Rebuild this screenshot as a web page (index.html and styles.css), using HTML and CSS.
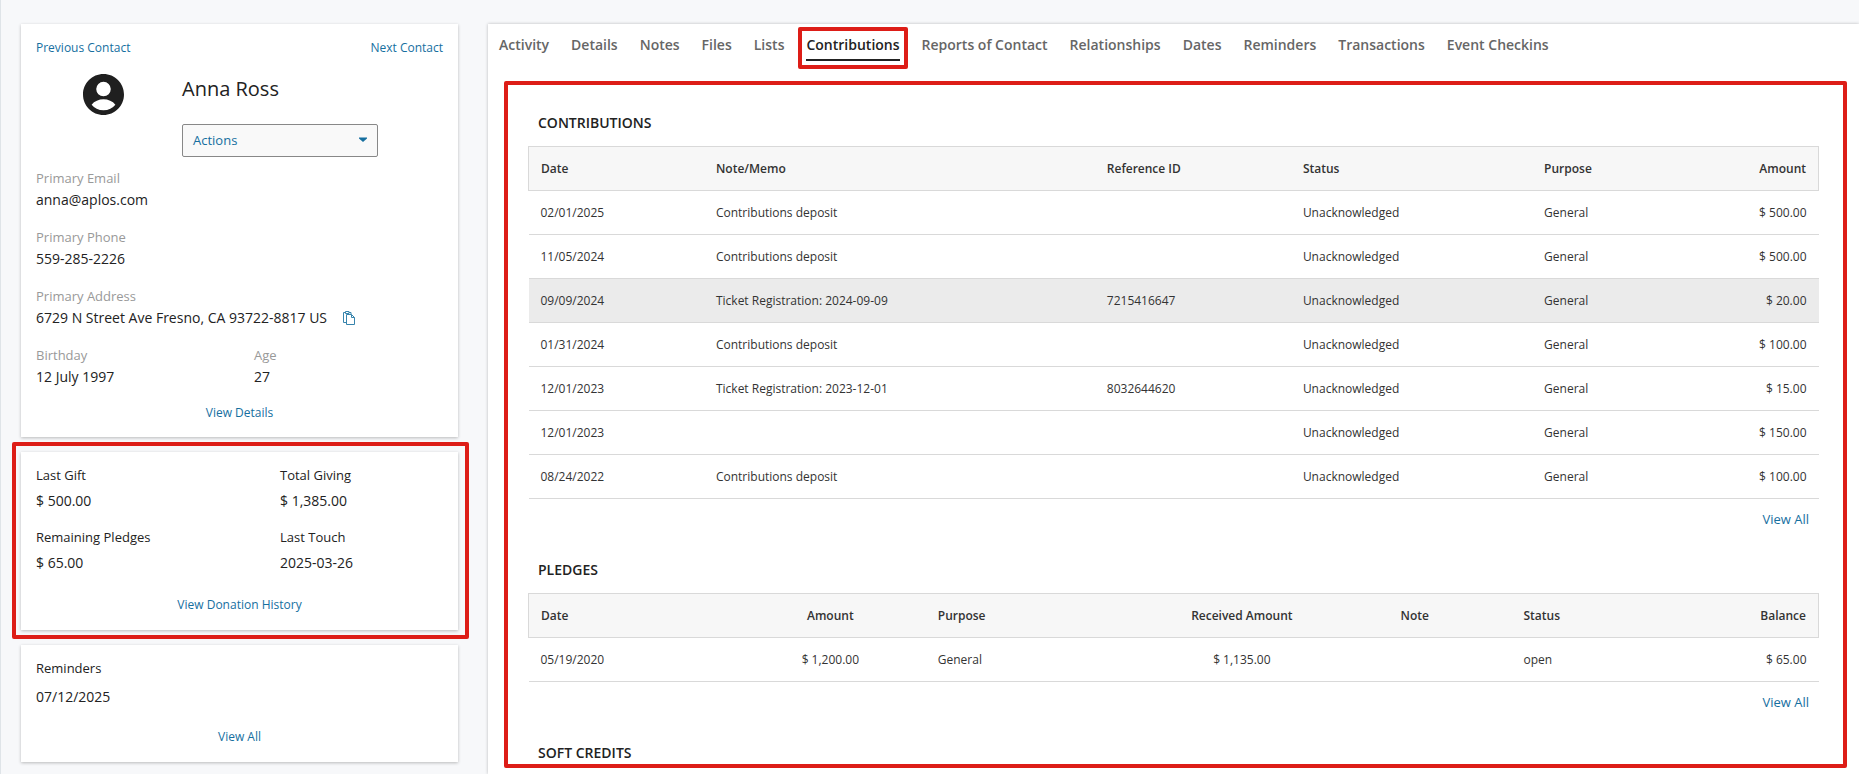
FILE: index.html
```
<!DOCTYPE html>
<html lang="en">
<head>
<meta charset="utf-8">
<title>Anna Ross - Contributions</title>
<link rel="stylesheet" href="styles.css">
</head>
<body>
<div class="page">
  <aside class="sidebar">
    <section class="card profile">
      <nav class="pager"><a href="#">Previous Contact</a><a href="#">Next Contact</a></nav>
      <div class="identity">
        <svg class="avatar" viewBox="2 2 20 20" aria-hidden="true"><path fill="#1f1f1f" d="M12 2C6.480 2 2 6.480 2 12s4.480 10 10 10 10-4.480 10-10S17.520 2 12 2zm0 3.800a3.500 3.500 0 0 1 0 7.100a3.500 3.500 0 0 1 0-7.100zM12 19.700c-2.400 0-4.500-1-5.800-2.700 1.300-1.800 3.600-2.700 5.800-2.700s4.500.9 5.800 2.700c-1.300 1.700-3.400 2.700-5.800 2.700z"/></svg>
        <div class="who">
          <h1>Anna Ross</h1>
          <button class="actions" type="button">Actions<svg width="8" height="5" viewBox="0 0 8 5" aria-hidden="true"><path fill="#166f9f" d="M0 0.500h8v1L4 5 0 1.500z"/></svg></button>
        </div>
      </div>
      <dl class="details">
        <div><dt>Primary Email</dt><dd>anna@aplos.com</dd></div>
        <div><dt>Primary Phone</dt><dd>559-285-2226</dd></div>
        <div><dt>Primary Address</dt><dd class="address">6729 N Street Ave Fresno, CA 93722-8817 US
          <button class="copy" type="button" aria-label="Copy address"><svg width="12" height="14" viewBox="0 0 12 14" fill="none" stroke="#3784ad" aria-hidden="true"><path d="M3.500 11.500h-3v-10h2M6 1.500h2v1.500M2.500 .5h3.500v2h-3.500zM3.500 3.500h5l3 3v7h-8zM8.500 3.500v3h3"/></svg></button></dd></div>
        <div class="pair"><div><dt>Birthday</dt><dd>12 July 1997</dd></div><div><dt>Age</dt><dd>27</dd></div></div>
      </dl>
      <a class="card-link" href="#">View Details</a>
    </section>
    <section class="card giving marked">
      <dl class="stats">
        <div><dt>Last Gift</dt><dd>$ 500.00</dd></div>
        <div><dt>Total Giving</dt><dd>$ 1,385.00</dd></div>
        <div><dt>Remaining Pledges</dt><dd>$ 65.00</dd></div>
        <div><dt>Last Touch</dt><dd>2025-03-26</dd></div>
      </dl>
      <a class="card-link" href="#">View Donation History</a>
    </section>
    <section class="card reminders">
      <h2>Reminders</h2>
      <p>07/12/2025</p>
      <a class="card-link" href="#">View All</a>
    </section>
  </aside>
  <main class="panel">
    <nav class="tabs">
      <a href="#">Activity</a><a href="#">Details</a><a href="#">Notes</a><a href="#">Files</a><a href="#">Lists</a><a class="current" href="#" aria-current="page">Contributions</a><a href="#">Reports of Contact</a><a href="#">Relationships</a><a href="#">Dates</a><a href="#">Reminders</a><a href="#">Transactions</a><a href="#">Event Checkins</a>
    </nav>
    <div class="content">
      <section>
        <h2>CONTRIBUTIONS</h2>
        <table class="contributions">
          <colgroup><col class="c-date"><col class="c-memo"><col class="c-ref"><col class="c-status"><col class="c-purpose"><col></colgroup>
          <thead><tr><th>Date</th><th>Note/Memo</th><th>Reference ID</th><th>Status</th><th>Purpose</th><th class="end">Amount</th></tr></thead>
          <tbody>
            <tr><td>02/01/2025</td><td>Contributions deposit</td><td></td><td>Unacknowledged</td><td>General</td><td class="end">$ 500.00</td></tr>
            <tr><td>11/05/2024</td><td>Contributions deposit</td><td></td><td>Unacknowledged</td><td>General</td><td class="end">$ 500.00</td></tr>
            <tr class="hover"><td>09/09/2024</td><td>Ticket Registration: 2024-09-09</td><td>7215416647</td><td>Unacknowledged</td><td>General</td><td class="end">$ 20.00</td></tr>
            <tr><td>01/31/2024</td><td>Contributions deposit</td><td></td><td>Unacknowledged</td><td>General</td><td class="end">$ 100.00</td></tr>
            <tr><td>12/01/2023</td><td>Ticket Registration: 2023-12-01</td><td>8032644620</td><td>Unacknowledged</td><td>General</td><td class="end">$ 15.00</td></tr>
            <tr><td>12/01/2023</td><td></td><td></td><td>Unacknowledged</td><td>General</td><td class="end">$ 150.00</td></tr>
            <tr><td>08/24/2022</td><td>Contributions deposit</td><td></td><td>Unacknowledged</td><td>General</td><td class="end">$ 100.00</td></tr>
          </tbody>
        </table>
        <a class="view-all" href="#">View All</a>
      </section>
      <section>
        <h2>PLEDGES</h2>
        <table class="pledges">
          <colgroup><col class="p-date"><col class="p-amount"><col class="p-purpose"><col class="p-received"><col class="p-note"><col class="p-status"><col></colgroup>
          <thead><tr><th>Date</th><th class="mid">Amount</th><th>Purpose</th><th class="mid">Received Amount</th><th class="mid">Note</th><th>Status</th><th class="end">Balance</th></tr></thead>
          <tbody>
            <tr><td>05/19/2020</td><td class="mid">$ 1,200.00</td><td>General</td><td class="mid">$ 1,135.00</td><td></td><td>open</td><td class="end">$ 65.00</td></tr>
          </tbody>
        </table>
        <a class="view-all" href="#">View All</a>
      </section>
      <section>
        <h2>SOFT CREDITS</h2>
      </section>
    </div>
  </main>
</div>
</body>
</html>
```
FILE: styles.css
```
* { box-sizing: border-box; }
body {
  margin: 0;
  height: 100vh;
  overflow: hidden;
  background: #f7f8fa;
  border-left: 1px solid #dfe4e8;
  color: #222;
  font: 14px/20px "Open Sans", "Noto Sans", sans-serif;
}
h1, h2, p, dl, dd { margin: 0; }
h1, h2 { font-weight: 400; }
a { color: #166f9f; text-decoration: none; }
button { font: inherit; cursor: pointer; }

.page {
  display: grid;
  grid-template-columns: 437px minmax(0, 1fr);
  gap: 30px;
  height: 100vh;
  padding: 24px 0 0 20px;
}

.sidebar { display: flex; flex-direction: column; gap: 15px; }
.card {
  display: flex;
  flex-direction: column;
  padding: 13px 15px 15px;
  background: #fff;
  box-shadow: 0 1px 3px rgba(0, 0, 0, 0.25);
}
.card-link { align-self: center; font-size: 12px; }

.profile { padding: 14px 15px; }
.pager { display: flex; justify-content: space-between; font-size: 12px; }
.identity { display: grid; grid-template-columns: 146px 1fr; }
.avatar { width: 41px; margin: 16px 0 0 47px; }
.who { display: flex; flex-direction: column; gap: 21px; padding-top: 17px; }
.who h1 { font-size: 20px; line-height: 28px; }
.actions {
  display: flex;
  align-items: center;
  justify-content: space-between;
  width: 196px;
  height: 33px;
  padding: 0 10px 2px;
  border: 1px solid #888;
  border-radius: 2px;
  background: #f9f9f9;
  color: #166f9f;
  font-size: 13px;
}

.details { display: flex; flex-direction: column; gap: 16px; margin-top: 11px; }
.details dt { color: #999; font-size: 13px; }
.details dd { margin-top: 1px; line-height: 22px; }
.address { display: flex; align-items: center; gap: 16px; }
.copy { display: flex; padding: 0; border: 0; background: none; color: inherit; }
.pair { display: grid; grid-template-columns: 218px 1fr; }
.profile .card-link { margin-top: 15px; }

.stats { display: grid; grid-template-columns: 244px 1fr; row-gap: 15px; }
.stats dt { font-size: 13px; }
.stats dd { margin-top: 5px; line-height: 22px; }
.giving .card-link { margin-top: 21px; }
.reminders h2 { font-size: 13px; }
.reminders p { margin-top: 9px; }
.reminders .card-link { margin-top: 20px; }

.marked { position: relative; }
.marked::before {
  content: "";
  position: absolute;
  inset: -10px -11px -9px -9px;
  border: 4px solid #dd1d17;
  border-radius: 2px;
}

.panel {
  display: flex;
  flex-direction: column;
  background: #fff;
  box-shadow: 0 0 3px rgba(0, 0, 0, 0.25);
}
.tabs { display: flex; gap: 22px; padding: 11px 11px 0; }
.tabs a { color: #666; font-weight: 600; padding-bottom: 4px; }
.tabs .current {
  position: relative;
  color: #222;
  border-bottom: 2px solid #222;
}
.tabs .current::before {
  content: "";
  position: absolute;
  inset: -8px -8px -10px;
  border: 4px solid #dd1d17;
  border-radius: 2px;
}

.content {
  flex: 1;
  display: flex;
  flex-direction: column;
  gap: 31px;
  min-height: 0;
  margin: 20px 12px 6px 16px;
  padding: 28px 24px 0 20px;
  border: 4px solid #dd1d17;
  border-radius: 2px;
  overflow: hidden;
}
.content section { display: flex; flex-direction: column; }
.content h2 { padding: 0 10px; font-size: 14px; font-weight: 600; }
table {
  width: 100%;
  margin-top: 13px;
  border-collapse: collapse;
  table-layout: fixed;
  color: #333;
  font-size: 12px;
  line-height: 18px;
}
th, td { height: 44px; padding: 0 12px; text-align: left; }
th { font-weight: 600; }
thead tr { background: #f7f7f7; border: 1px solid #d9d9d9; }
tbody tr { border-bottom: 1px solid #d9d9d9; }
.hover { background: #ebebeb; }
.end { text-align: right; }
.mid { text-align: center; }
.view-all { align-self: flex-end; margin-top: 10px; padding-right: 10px; font-size: 13px; }

.c-date { width: 13.6%; }
.c-memo { width: 30.3%; }
.c-ref { width: 15.2%; }
.c-status { width: 18.7%; }
.c-purpose { width: 11%; }

.p-date { width: 16%; }
.p-amount { width: 14.8%; }
.p-purpose { width: 18.6%; }
.p-received { width: 11.8%; }
.p-note { width: 15%; }
.p-status { width: 12%; }
```
